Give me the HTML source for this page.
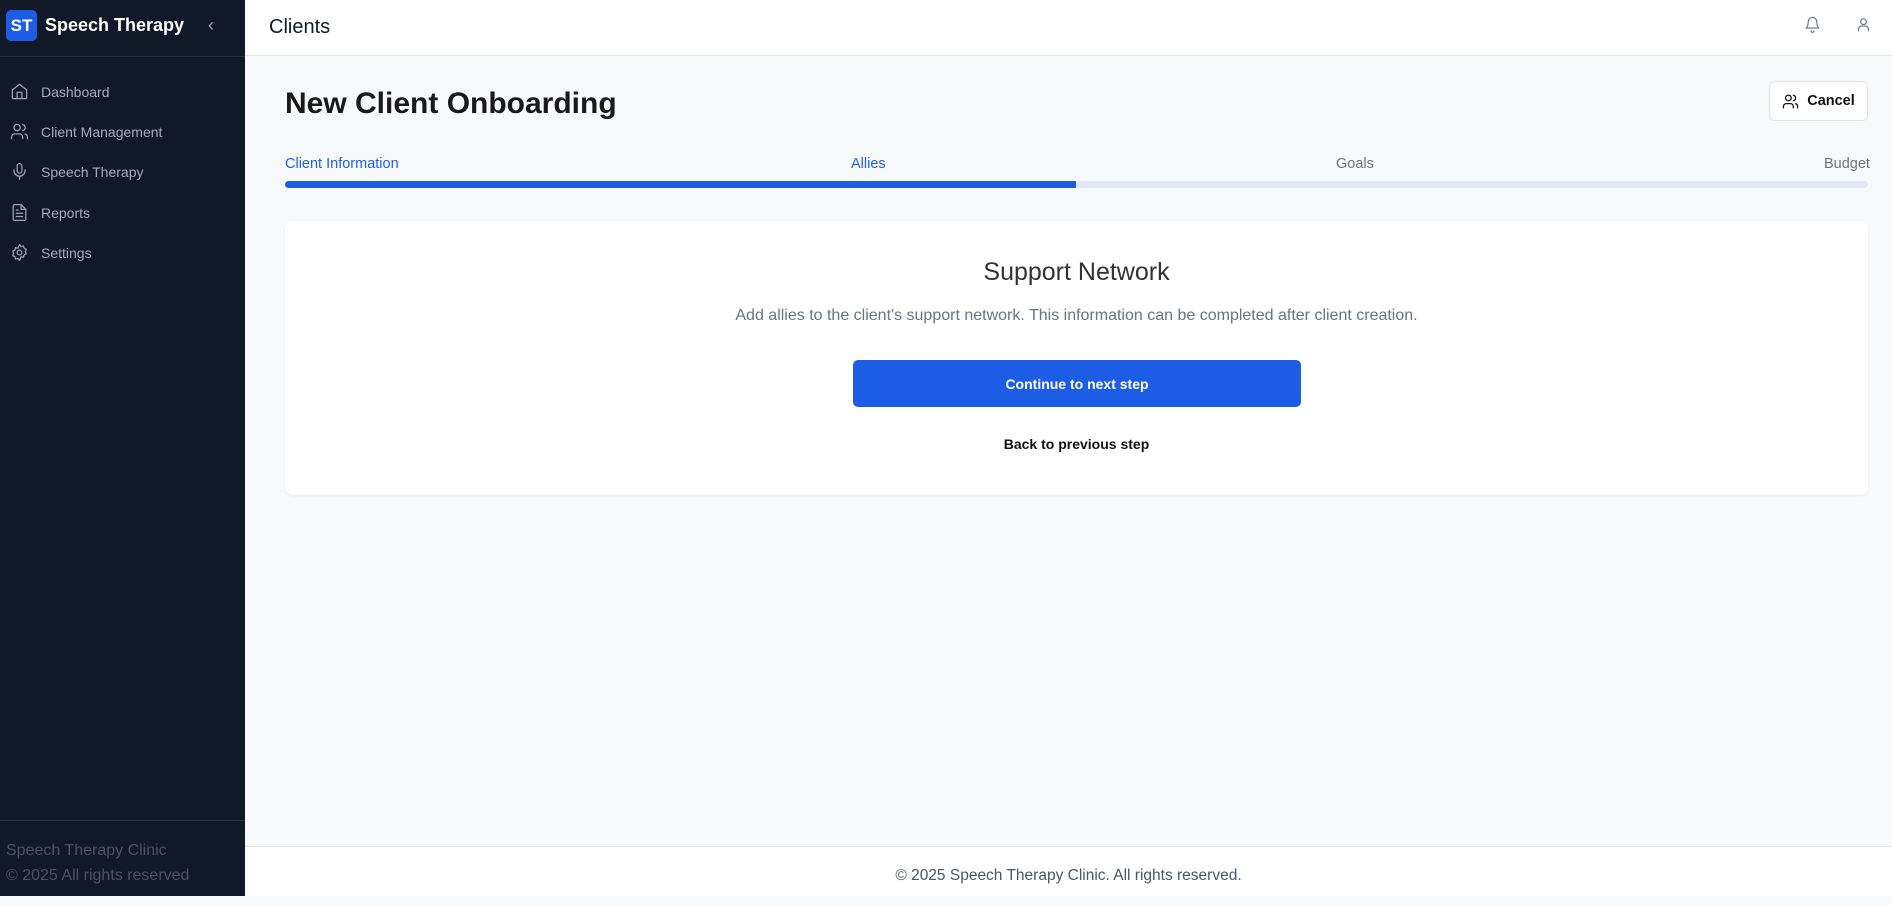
<!DOCTYPE html>
<html><head><meta charset="utf-8"><style>
*{box-sizing:border-box;margin:0;padding:0}
body{width:1892px;height:896px;overflow:hidden;font-family:"Liberation Sans",sans-serif;background:#f8f9fb;position:relative}
.sb{position:absolute;left:0;top:0;width:245px;height:896px;background:#111827}
.logo{position:absolute;left:6px;top:10px;width:31px;height:31px;background:#1d5de6;border-radius:5px;color:#fff;font-weight:bold;font-size:17px;text-align:center;line-height:31px}
.brand{position:absolute;left:45px;top:15px;color:#fff;font-weight:bold;font-size:18px}
.chev{position:absolute;left:208px;top:15px;color:#9ca3af;font-size:18px}
.sbl{position:absolute;left:0;width:245px;height:1px;background:#263041}
.nav{position:absolute;left:10px;display:flex;align-items:center;color:#a5adba;font-size:14px}
.nav svg{width:19px;height:19px;margin-right:12px;stroke:#9ca3af;fill:none;stroke-width:1.6;stroke-linecap:round;stroke-linejoin:round}
.sf{position:absolute;left:6px;color:#4b5563;font-size:16px}
.hd{position:absolute;left:245px;top:0;right:0;height:56px;background:#fff;border-bottom:1px solid #e5e7eb}
.hd h2{position:absolute;left:24px;top:16px;font-size:20px;font-weight:normal;color:#111827}
.ic{position:absolute;stroke:#6b7280;fill:none;stroke-width:1.6;stroke-linecap:round;stroke-linejoin:round}
h1{position:absolute;left:285px;top:87px;font-size:30px;color:#1a1a1a}
.cancel{position:absolute;left:1769px;top:81px;width:99px;height:40px;border:1px solid #e2e4e8;border-radius:6px;background:#fff;font-size:14.5px;font-weight:bold;color:#111;display:flex;align-items:center;justify-content:center;gap:8px}
.st{position:absolute;top:156px;font-size:14.5px;color:#6b7280}
.bar{position:absolute;left:285px;top:181px;width:1583px;height:7px;background:#e1e7f4;border-radius:4px;overflow:hidden}
.bar div{width:791px;height:7px;background:#1d5de6}
.card{position:absolute;left:285px;top:221px;width:1583px;height:274px;background:#fff;border-radius:8px;box-shadow:0 1px 2px rgba(0,0,0,.06);text-align:center}
.card h3{position:absolute;left:0;right:0;top:37px;font-size:25px;font-weight:normal;color:#333}
.card p{position:absolute;left:0;right:0;top:86px;font-size:16px;color:#6b7280}
.btn{position:absolute;left:568px;top:139px;width:448px;height:47px;background:#1d5de6;border-radius:5px;color:#fff;font-weight:bold;font-size:14px;line-height:49px}
.back{position:absolute;left:0;right:0;top:215px;font-size:14px;font-weight:bold;color:#111}
.ft{position:absolute;left:245px;right:0;top:846px;height:50px;background:#fff;border-top:1px solid #e5e7eb;text-align:center;font-size:15.5px;color:#4b5563;line-height:58px}
</style></head><body>
<div class="sb">
<div class="logo">ST</div><div class="brand">Speech Therapy</div><div class="chev">‹</div>
<div class="sbl" style="top:56px"></div>
<div class="nav" style="top:82px"><svg viewBox="0 0 24 24"><path d="M3 10l9-7 9 7v10a1 1 0 0 1-1 1H4a1 1 0 0 1-1-1z"/><path d="M9 21v-8h6v8"/></svg>Dashboard</div>
<div class="nav" style="top:122px"><svg viewBox="0 0 24 24"><circle cx="9" cy="7" r="4"/><path d="M2 21v-2a4 4 0 0 1 4-4h6a4 4 0 0 1 4 4v2M16 3.1a4 4 0 0 1 0 7.8M22 21v-2a4 4 0 0 0-3-3.9"/></svg>Client Management</div>
<div class="nav" style="top:162px"><svg viewBox="0 0 24 24"><rect x="9" y="2" width="6" height="12" rx="3"/><path d="M5 10v1a7 7 0 0 0 14 0v-1M12 18v4"/></svg>Speech Therapy</div>
<div class="nav" style="top:203px"><svg viewBox="0 0 24 24"><path d="M14 2H6a2 2 0 0 0-2 2v16a2 2 0 0 0 2 2h12a2 2 0 0 0 2-2V8z"/><path d="M14 2v6h6M8 13h8M8 17h8M8 9h2"/></svg>Reports</div>
<div class="nav" style="top:243px"><svg viewBox="0 0 24 24"><circle cx="12" cy="12" r="3"/><path d="M12 2l2 2.5 3-.8.8 3 2.7 1.3-1 2.9 1 2.9-2.7 1.3-.8 3-3-.8L12 22l-2-2.5-3 .8-.8-3L3.5 16l1-2.9-1-2.9 2.7-1.3.8-3 3 .8z"/></svg>Settings</div>
<div class="sbl" style="top:820px"></div>
<div class="sf" style="top:842px">Speech Therapy Clinic</div>
<div class="sf" style="top:867px">© 2025 All rights reserved</div>
</div>
<div class="hd"><h2>Clients</h2>
<svg class="ic" style="left:1559px;top:16px" width="17" height="17" viewBox="0 0 24 24"><path d="M6 8a6 6 0 0 1 12 0c0 7 3 9 3 9H3s3-2 3-9M10 21a2 2 0 0 0 4 0"/></svg>
<svg class="ic" style="left:1610px;top:16px" width="17" height="17" viewBox="0 0 24 24"><circle cx="12" cy="8" r="4"/><path d="M5 21v-2a5 5 0 0 1 5-5h4a5 5 0 0 1 5 5v2"/></svg>
</div>
<h1>New Client Onboarding</h1>
<div class="cancel"><svg width="17" height="17" viewBox="0 0 24 24" fill="none" stroke="#111" stroke-width="1.8" stroke-linecap="round"><circle cx="9" cy="7" r="4"/><path d="M2 21v-2a4 4 0 0 1 4-4h6a4 4 0 0 1 4 4v2M16 3.1a4 4 0 0 1 0 7.8M22 21v-2a4 4 0 0 0-3-3.9"/></svg>Cancel</div>
<div class="st" style="left:285px;color:#1d5de6">Client Information</div>
<div class="st" style="left:851px;color:#1d5de6">Allies</div>
<div class="st" style="left:1336px">Goals</div>
<div class="st" style="left:1824px">Budget</div>
<div class="bar"><div></div></div>
<div class="card"><h3>Support Network</h3>
<p>Add allies to the client's support network. This information can be completed after client creation.</p>
<div class="btn">Continue to next step</div>
<div class="back">Back to previous step</div></div>
<div class="ft">© 2025 Speech Therapy Clinic. All rights reserved.</div>
</body></html>
